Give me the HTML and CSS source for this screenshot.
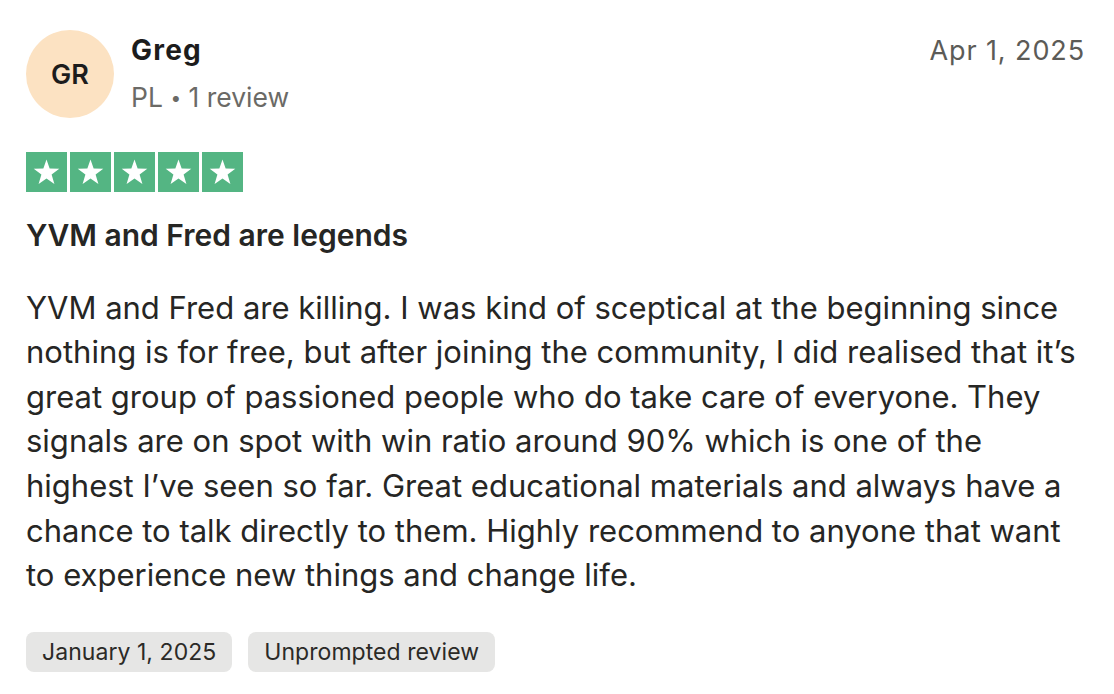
FILE: index.html
```html
<!DOCTYPE html>
<html lang="en">
<head>
<meta charset="utf-8">
<title>Review</title>
<link rel="stylesheet" href="styles.css">
</head>
<body>
<article class="review">
  <header class="head">
    <div class="avatar">GR</div>
    <div class="who">
      <div class="name">Greg</div>
      <div class="meta">PL <span class="dot">•</span> 1 review</div>
    </div>
    <time class="date">Apr 1, 2025</time>
  </header>
  <div class="stars">
    <span class="star"><svg viewBox="0 0 40 40" width="41" height="40"><polygon points="20,7.5 23.15,16.6 32.8,16.8 25.1,22.6 27.9,31.9 20,26.4 12.1,31.9 14.9,22.6 7.2,16.8 16.85,16.6" fill="#fff"/></svg></span>
    <span class="star"><svg viewBox="0 0 40 40" width="41" height="40"><polygon points="20,7.5 23.15,16.6 32.8,16.8 25.1,22.6 27.9,31.9 20,26.4 12.1,31.9 14.9,22.6 7.2,16.8 16.85,16.6" fill="#fff"/></svg></span>
    <span class="star"><svg viewBox="0 0 40 40" width="41" height="40"><polygon points="20,7.5 23.15,16.6 32.8,16.8 25.1,22.6 27.9,31.9 20,26.4 12.1,31.9 14.9,22.6 7.2,16.8 16.85,16.6" fill="#fff"/></svg></span>
    <span class="star"><svg viewBox="0 0 40 40" width="41" height="40"><polygon points="20,7.5 23.15,16.6 32.8,16.8 25.1,22.6 27.9,31.9 20,26.4 12.1,31.9 14.9,22.6 7.2,16.8 16.85,16.6" fill="#fff"/></svg></span>
    <span class="star"><svg viewBox="0 0 40 40" width="41" height="40"><polygon points="20,7.5 23.15,16.6 32.8,16.8 25.1,22.6 27.9,31.9 20,26.4 12.1,31.9 14.9,22.6 7.2,16.8 16.85,16.6" fill="#fff"/></svg></span>
  </div>
  <h2 class="title">YVM and Fred are legends</h2>
  <p class="body">YVM and Fred are killing. I was kind of sceptical at the beginning since<br>nothing is for free, but after joining the community, I did realised that it’s<br>great group of passioned people who do take care of everyone. They<br>signals are on spot with win ratio around 90% which is one of the<br>highest I’ve seen so far. Great educational materials and always have a<br>chance to talk directly to them. Highly recommend to anyone that want<br>to experience new things and change life.</p>
  <div class="tags">
    <span class="tag">January 1, 2025</span>
    <span class="tag">Unprompted review</span>
  </div>
</article>
</body>
</html>
```

FILE: styles.css
```css
html, body {
  margin: 0;
  padding: 0;
  background: #ffffff;
}
body {
  font-family: Inter, "Noto Sans", sans-serif;
  color: #262624;
}
.review {
  padding: 30px 10px 0 26px;
}
.head {
  display: flex;
  align-items: flex-start;
  padding-right: 19px;
}
.avatar {
  width: 88px;
  height: 88px;
  border-radius: 50%;
  background: #fce2c2;
  color: #1c1c1c;
  font-size: 27px;
  font-weight: 600;
  display: flex;
  align-items: center;
  justify-content: center;
  flex: none;
}
.who {
  margin: -3px 0 -3px 17px;
  line-height: 47px;
}
.name {
  font-size: 28px;
  font-weight: 700;
  letter-spacing: 1.2px;
  color: #1c1c1c;
}
.meta {
  font-size: 26.5px;
  color: #6b6a66;
}
.dot {
  font-size: 19px;
  vertical-align: 2px;
}
.date {
  margin-left: auto;
  margin-top: -3px;
  line-height: 47px;
  font-size: 27px;
  letter-spacing: 0.9px;
  color: #5c5b57;
}
.stars {
  display: flex;
  gap: 3px;
  margin-top: 33px;
}
.star {
  display: block;
  width: 41px;
  height: 40px;
  background: #54b583;
}
.star svg {
  display: block;
}
.title {
  margin: 21px 0 0;
  font-size: 30px;
  font-weight: 600;
  line-height: 44.6px;
  color: #262624;
}
.body {
  margin: 28px 0 0;
  font-size: 31px;
  line-height: 44.6px;
  white-space: nowrap;
  color: #262624;
}
.tags {
  display: flex;
  gap: 16px;
  margin-top: 34px;
}
.tag {
  height: 40px;
  line-height: 40px;
  padding: 0 16px;
  border-radius: 8px;
  background: #e6e6e5;
  font-size: 23px;
  letter-spacing: 0.05px;
  color: #2b2a27;
}
```
